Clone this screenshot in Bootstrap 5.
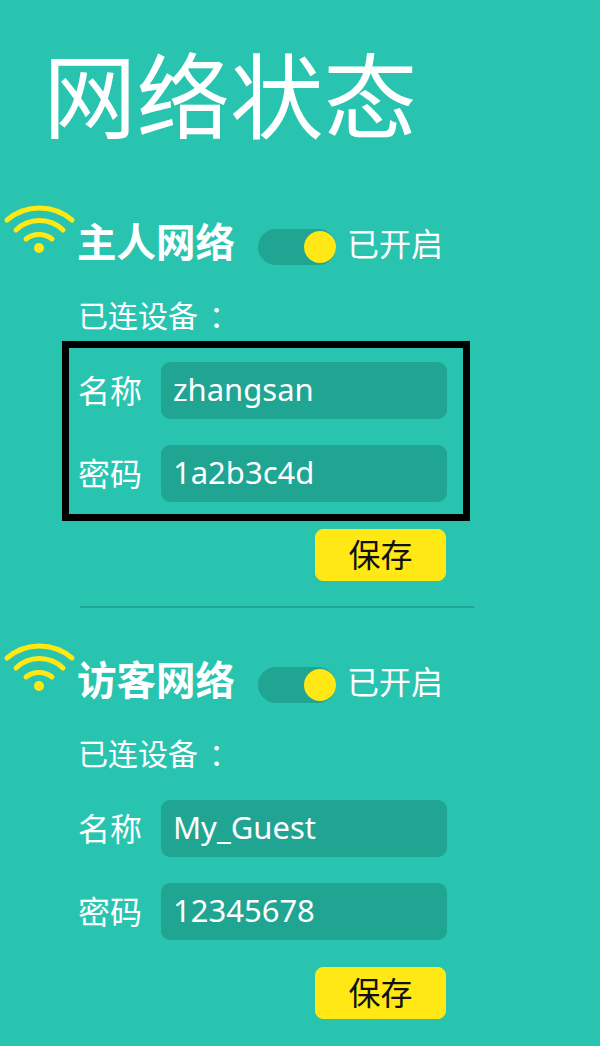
<!DOCTYPE html>
<html lang="zh">
<head>
<meta charset="utf-8">
<title>网络状态</title>
<link href="https://cdn.jsdelivr.net/npm/bootstrap@5.3.0/dist/css/bootstrap.min.css" rel="stylesheet">
<style>
html,body{height:100%}
body{background:#29c4b0;color:#fff;font-family:"Noto Sans","Noto Sans CJK SC",sans-serif;overflow:hidden}
.page-wrap{padding:0 0 0 5px;width:600px}
.page-title{font-family:"Noto Sans CJK SC",sans-serif;font-size:93.5px;font-weight:400;line-height:110px;margin:37px 0 0 38px;height:110px;white-space:nowrap}
.net-block{height:438px}
.net-block.first-net{margin-top:56px}
.net-head{height:62px}
.wifi-ico{width:70px;height:54px;flex:none;margin-right:2px;align-self:flex-start;overflow:visible}
.net-name{font-family:"Noto Sans CJK SC",sans-serif;font-size:39.5px;font-weight:700;line-height:44px;margin:15px 0 0;width:181px;white-space:nowrap}
.net-switch{width:78px;height:36px;border-radius:18px;background:#20a592;position:relative;flex:none;margin-top:26px}
.net-knob{position:absolute;right:0;top:2px;width:32px;height:32px;border-radius:50%;background:#ffe813}
.net-state{font-family:"Noto Sans CJK SC",sans-serif;font-size:32px;line-height:44px;margin:17px 0 0 11px;font-weight:400}
.net-devices{font-family:"Noto Sans CJK SC",sans-serif;font-size:30px;font-weight:400;line-height:40px;margin:29px 0 0 73px;height:40px}
.dev-colon{margin-left:11px}
.cred-box{width:408px;height:180px;margin:7px 0 0 57px;border:7px solid transparent;padding:14px 16px 0 9px}
.cred-box.boxed{border-color:#000}
.cred-row{height:57px;margin-bottom:26px}
.cred-label{font-family:"Noto Sans CJK SC",sans-serif;font-size:32px;font-weight:400;width:83px;flex:none;line-height:44px;margin-bottom:4px}
.cred-value{background:#20a592;border-radius:9px;width:286px;height:57px;padding:0 12px;font-size:31px;line-height:55px;color:#fff}
.save-btn{--bs-btn-bg:#ffe813;--bs-btn-border-color:#ffe813;--bs-btn-color:#111;--bs-btn-hover-bg:#ffe813;--bs-btn-hover-border-color:#ffe813;--bs-btn-hover-color:#111;font-family:"Noto Sans CJK SC",sans-serif;font-size:32px;line-height:44px;width:131px;height:52px;padding:0 0 5px;border-radius:8px;display:block;margin:8px 0 0 310px}
.net-rule{width:394px;margin:25px 0 0 75px;border-top:2px solid #20a592;opacity:1}
</style>
</head>
<body>
<main class="page-wrap">
  <h1 class="page-title">网络状态</h1>

  <section class="net-block first-net">
    <div class="net-head d-flex">
      <svg class="wifi-ico" viewBox="0 0 70 54" fill="none" stroke="#ffe813" stroke-width="5" stroke-linecap="round"><path d="M2 17A50 50 0 0 1 67 17"/><path d="M11 27A34 34 0 0 1 58 27"/><path d="M21 36A21 21 0 0 1 47 36"/><circle cx="34" cy="45" r="5" fill="#ffe813" stroke="none"/></svg>
      <h2 class="net-name">主人网络</h2>
      <div class="net-switch"><span class="net-knob"></span></div>
      <span class="net-state">已开启</span>
    </div>
    <div class="net-devices">已连设备<span class="dev-colon">：</span></div>
    <div class="cred-box boxed">
      <div class="cred-row d-flex align-items-center"><span class="cred-label">名称</span><div class="cred-value">zhangsan</div></div>
      <div class="cred-row d-flex align-items-center"><span class="cred-label">密码</span><div class="cred-value">1a2b3c4d</div></div>
    </div>
    <button type="button" class="btn save-btn">保存</button>
    <hr class="net-rule">
  </section>

  <section class="net-block">
    <div class="net-head d-flex">
      <svg class="wifi-ico" viewBox="0 0 70 54" fill="none" stroke="#ffe813" stroke-width="5" stroke-linecap="round"><path d="M2 17A50 50 0 0 1 67 17"/><path d="M11 27A34 34 0 0 1 58 27"/><path d="M21 36A21 21 0 0 1 47 36"/><circle cx="34" cy="45" r="5" fill="#ffe813" stroke="none"/></svg>
      <h2 class="net-name">访客网络</h2>
      <div class="net-switch"><span class="net-knob"></span></div>
      <span class="net-state">已开启</span>
    </div>
    <div class="net-devices">已连设备<span class="dev-colon">：</span></div>
    <div class="cred-box">
      <div class="cred-row d-flex align-items-center"><span class="cred-label">名称</span><div class="cred-value">My_Guest</div></div>
      <div class="cred-row d-flex align-items-center"><span class="cred-label">密码</span><div class="cred-value">12345678</div></div>
    </div>
    <button type="button" class="btn save-btn">保存</button>
  </section>
</main>
<script src="https://cdn.jsdelivr.net/npm/bootstrap@5.3.0/dist/js/bootstrap.bundle.min.js"></script>
</body>
</html>
